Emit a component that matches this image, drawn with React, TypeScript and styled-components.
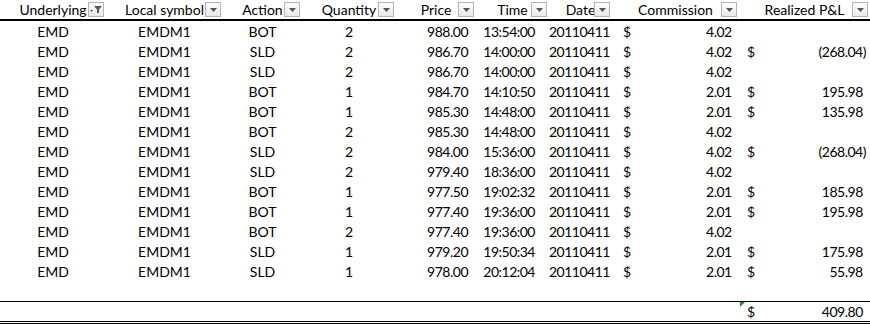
import React from "react";
import styled, { createGlobalStyle } from "styled-components";

const GlobalStyle = createGlobalStyle`
  html, body {
    margin: 0;
    padding: 0;
    background: #ffffff;
  }
  body {
    font-family: Lato, "Open Sans", "Liberation Sans", sans-serif;
    font-size: 14px;
    color: #000000;
  }
`;

// largeurs des colonnes, comme dans la feuille
const COLS = "106px 117px 79px 94px 80px 73px 63px 127px 131px";

const Sheet = styled.div`
  width: 870px;
  height: 324px;
  overflow: hidden;
`;

const HeaderRow = styled.div`
  display: grid;
  grid-template-columns: ${COLS};
  height: 19px;
  border-bottom: 2px solid #000000;
`;

const HeadCell = styled.div`
  position: relative;
  display: flex;
  align-items: center;
  justify-content: center;
  white-space: nowrap;
  line-height: 19px;
`;

const FilterButton = styled.span`
  position: absolute;
  right: 2px;
  top: 2px;
  width: 14px;
  height: 13px;
  border: 1px solid #b4b4b4;
  background: linear-gradient(#ffffff, #e8e8e8);
  display: flex;
  align-items: center;
  justify-content: center;
`;

const Row = styled.div<{ $height?: number }>`
  display: grid;
  grid-template-columns: ${COLS};
  height: ${({ $height }) => $height ?? 20}px;
  align-items: center;
  line-height: 20px;
  padding-top: ${({ $height }) => ($height ? 0 : 1)}px;
  margin-bottom: ${({ $height }) => ($height ? 0 : -1)}px;
`;

const Cell = styled.div<{ $align?: "left" | "center" | "right"; $pad?: number; $num?: boolean }>`
  text-align: ${({ $align }) => $align ?? "center"};
  padding-right: ${({ $pad }) => $pad ?? 0}px;
  letter-spacing: ${({ $num }) => ($num ? "-0.5px" : "normal")};
  white-space: nowrap;
`;

const MoneyCell = styled.div<{ $left: number }>`
  position: relative;
  display: flex;
  justify-content: space-between;
  padding-left: ${({ $left }) => $left}px;
  padding-right: 4px;
  white-space: nowrap;
  letter-spacing: -0.5px;
`;

const Paren = styled.span<{ $hidden?: boolean }>`
  visibility: ${({ $hidden }) => ($hidden ? "hidden" : "visible")};
`;

const TotalRow = styled.div`
  display: grid;
  grid-template-columns: ${COLS};
  height: 19px;
  line-height: 20px;
  border-top: 1px solid #000000;
  border-bottom: 3px double #000000;
`;

const ErrorMark = styled.span`
  position: absolute;
  left: 1px;
  top: 0;
  width: 0;
  height: 0;
  border-top: 5px solid #1e8a1e;
  border-right: 5px solid transparent;
`;

const Arrow = () => (
  <svg width="7" height="4" viewBox="0 0 7 4">
    <path d="M0 0h7L3.5 4z" fill="#555555" />
  </svg>
);

const Funnel = () => (
  <svg width="12" height="9" viewBox="0 0 12 9">
    <path d="M0 5h3L1.5 7z" fill="#555555" />
    <path d="M4 1h8L9 4.5V8H7V4.5z" fill="#555555" />
  </svg>
);

type Trade = [string, number, string, string, string, number | null];

const trades: Trade[] = [
  ["BOT", 2, "988.00", "13:54:00", "4.02", null],
  ["SLD", 2, "986.70", "14:00:00", "4.02", -268.04],
  ["SLD", 2, "986.70", "14:00:00", "4.02", null],
  ["BOT", 1, "984.70", "14:10:50", "2.01", 195.98],
  ["BOT", 1, "985.30", "14:48:00", "2.01", 135.98],
  ["BOT", 2, "985.30", "14:48:00", "4.02", null],
  ["SLD", 2, "984.00", "15:36:00", "4.02", -268.04],
  ["SLD", 2, "979.40", "18:36:00", "4.02", null],
  ["BOT", 1, "977.50", "19:02:32", "2.01", 185.98],
  ["BOT", 1, "977.40", "19:36:00", "2.01", 195.98],
  ["BOT", 2, "977.40", "19:36:00", "4.02", null],
  ["SLD", 1, "979.20", "19:50:34", "2.01", 175.98],
  ["SLD", 1, "978.00", "20:12:04", "2.01", 55.98],
];

const headers = [
  "Underlying",
  "Local symbol",
  "Action",
  "Quantity",
  "Price",
  "Time",
  "Date",
  "Commission",
  "Realized P&L",
];

// format comptable : $ à gauche, parenthèses pour les négatifs
const Money: React.FC<{ value: number | string | null; left: number; children?: React.ReactNode }> = ({
  value,
  left,
  children,
}) => {
  if (value === null) return <div />;
  const neg = typeof value === "number" && value < 0;
  const text = typeof value === "number" ? Math.abs(value).toFixed(2) : value;
  return (
    <MoneyCell $left={left}>
      {children}
      <span>$</span>
      <span>
        {neg ? `(${text}` : text}
        <Paren $hidden={!neg}>)</Paren>
      </span>
    </MoneyCell>
  );
};

export default function App() {
  return (
    <Sheet>
      <GlobalStyle />
      <HeaderRow>
        {headers.map((h, i) => (
          <HeadCell key={h}>
            {h}
            <FilterButton>{i === 0 ? <Funnel /> : <Arrow />}</FilterButton>
          </HeadCell>
        ))}
      </HeaderRow>
      {trades.map((t, i) => (
        <Row key={i}>
          <Cell>EMD</Cell>
          <Cell>EMDM1</Cell>
          <Cell>{t[0]}</Cell>
          <Cell>{t[1]}</Cell>
          <Cell $align="right" $pad={8} $num>{t[2]}</Cell>
          <Cell $align="right" $pad={14} $num>{t[3]}</Cell>
          <Cell $align="right" $pad={5} $num>20110411</Cell>
          <Money value={t[4]} left={11} />
          <Money value={t[5]} left={8} />
        </Row>
      ))}
      <Row $height={20} />
      <TotalRow>
        <div />
        <div />
        <div />
        <div />
        <div />
        <div />
        <div />
        <div />
        <Money value={409.8} left={8}>
          <ErrorMark />
        </Money>
      </TotalRow>
    </Sheet>
  );
}
